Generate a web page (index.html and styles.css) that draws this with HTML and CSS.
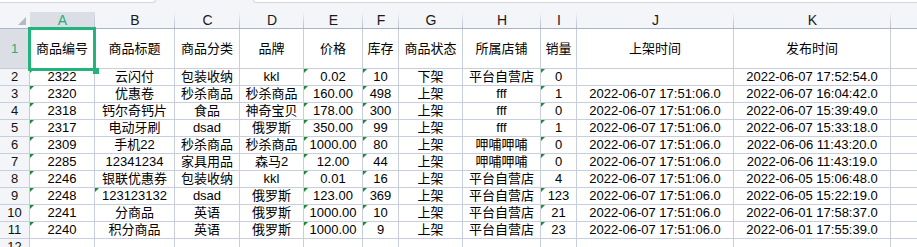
FILE: index.html
```html
<!DOCTYPE html>
<html lang="zh">
<head>
<meta charset="utf-8">
<title>Sheet</title>
<link rel="stylesheet" href="styles.css">
</head>
<body>
<div class="app">
  <div class="topbar">
    <div class="fbox name-box"></div>
    <div class="fbox formula-box"></div>
  </div>
  <div class="sheet">
    <div class="grid">
      <div class="corner"><span class="corner-tri"></span></div>
      <div class="colh sel">A</div><div class="colh">B</div><div class="colh">C</div><div class="colh">D</div><div class="colh">E</div><div class="colh">F</div><div class="colh">G</div><div class="colh">H</div><div class="colh">I</div><div class="colh">J</div><div class="colh">K</div><div class="colh last"></div>

      <div class="rowh sel">1</div>
      <div class="c">商品编号</div><div class="c">商品标题</div><div class="c">商品分类</div><div class="c">品牌</div><div class="c">价格</div><div class="c">库存</div><div class="c">商品状态</div><div class="c">所属店铺</div><div class="c">销量</div><div class="c">上架时间</div><div class="c">发布时间</div><div class="c"></div>

      <div class="rowh">2</div>
      <div class="c t">2322</div><div class="c">云闪付</div><div class="c">包装收纳</div><div class="c">kkl</div><div class="c t">0.02</div><div class="c t">10</div><div class="c">下架</div><div class="c">平台自营店</div><div class="c t">0</div><div class="c"></div><div class="c">2022-06-07 17:52:54.0</div><div class="c"></div>

      <div class="rowh">3</div>
      <div class="c t">2320</div><div class="c">优惠卷</div><div class="c">秒杀商品</div><div class="c">秒杀商品</div><div class="c t">160.00</div><div class="c t">498</div><div class="c">上架</div><div class="c">fff</div><div class="c t">1</div><div class="c">2022-06-07 17:51:06.0</div><div class="c">2022-06-07 16:04:42.0</div><div class="c"></div>

      <div class="rowh">4</div>
      <div class="c t">2318</div><div class="c">钙尔奇钙片</div><div class="c">食品</div><div class="c">神奇宝贝</div><div class="c t">178.00</div><div class="c t">300</div><div class="c">上架</div><div class="c">fff</div><div class="c t">0</div><div class="c">2022-06-07 17:51:06.0</div><div class="c">2022-06-07 15:39:49.0</div><div class="c"></div>

      <div class="rowh">5</div>
      <div class="c t">2317</div><div class="c">电动牙刷</div><div class="c">dsad</div><div class="c">俄罗斯</div><div class="c t">350.00</div><div class="c t">99</div><div class="c">上架</div><div class="c">fff</div><div class="c t">1</div><div class="c">2022-06-07 17:51:06.0</div><div class="c">2022-06-07 15:33:18.0</div><div class="c"></div>

      <div class="rowh">6</div>
      <div class="c t">2309</div><div class="c">手机22</div><div class="c">秒杀商品</div><div class="c">秒杀商品</div><div class="c t">1000.00</div><div class="c t">80</div><div class="c">上架</div><div class="c">呷哺呷哺</div><div class="c t">0</div><div class="c">2022-06-07 17:51:06.0</div><div class="c">2022-06-06 11:43:20.0</div><div class="c"></div>

      <div class="rowh">7</div>
      <div class="c t">2285</div><div class="c">12341234</div><div class="c">家具用品</div><div class="c">森马2</div><div class="c t">12.00</div><div class="c t">44</div><div class="c">上架</div><div class="c">呷哺呷哺</div><div class="c t">0</div><div class="c">2022-06-07 17:51:06.0</div><div class="c">2022-06-06 11:43:19.0</div><div class="c"></div>

      <div class="rowh">8</div>
      <div class="c t">2246</div><div class="c">银联优惠券</div><div class="c">包装收纳</div><div class="c">kkl</div><div class="c t">0.01</div><div class="c t">16</div><div class="c">上架</div><div class="c">平台自营店</div><div class="c">4</div><div class="c">2022-06-07 17:51:06.0</div><div class="c">2022-06-05 15:06:48.0</div><div class="c"></div>

      <div class="rowh">9</div>
      <div class="c t">2248</div><div class="c t">123123132</div><div class="c">dsad</div><div class="c">俄罗斯</div><div class="c t">123.00</div><div class="c t">369</div><div class="c">上架</div><div class="c">平台自营店</div><div class="c t">123</div><div class="c">2022-06-07 17:51:06.0</div><div class="c">2022-06-05 15:22:19.0</div><div class="c"></div>

      <div class="rowh">10</div>
      <div class="c t">2241</div><div class="c">分商品</div><div class="c">英语</div><div class="c">俄罗斯</div><div class="c t">1000.00</div><div class="c t">10</div><div class="c">上架</div><div class="c">平台自营店</div><div class="c t">21</div><div class="c">2022-06-07 17:51:06.0</div><div class="c">2022-06-01 17:58:37.0</div><div class="c"></div>

      <div class="rowh">11</div>
      <div class="c t">2240</div><div class="c">积分商品</div><div class="c">英语</div><div class="c">俄罗斯</div><div class="c t">1000.00</div><div class="c t">9</div><div class="c">上架</div><div class="c">平台自营店</div><div class="c t">23</div><div class="c">2022-06-07 17:51:06.0</div><div class="c">2022-06-01 17:55:39.0</div><div class="c"></div>

      <div class="rowh">12</div>
      <div class="c"></div><div class="c"></div><div class="c"></div><div class="c"></div><div class="c"></div><div class="c"></div><div class="c"></div><div class="c"></div><div class="c"></div><div class="c"></div><div class="c"></div><div class="c"></div>
    </div>
    <div class="selection"><span class="handle"></span></div>
  </div>
</div>
</body>
</html>
```

FILE: styles.css
```css
html, body {
  margin: 0;
  padding: 0;
  background: #ffffff;
  overflow: hidden;
}

.app {
  width: 917px;
  height: 247px;
  overflow: hidden;
  font-family: "Liberation Sans", Arial, "Noto Sans CJK SC", sans-serif;
  color: #000;
}

.topbar {
  height: 4px;
  display: flex;
  background: #f4f5f8;
  border-bottom: 0;
}

.fbox {
  height: 3px;
  box-sizing: border-box;
  background: #fff;
  border: 1px solid #d3d6dc;
  border-top: none;
}

.name-box {
  width: 157px;
  margin-left: -1px;
  border-radius: 0 0 4px 0;
}

.formula-box {
  flex: 1;
  margin-left: 97px;
  margin-right: -6px;
  border-radius: 0 0 0 4px;
}

.sheet {
  position: relative;
  background: #f4f5f8;
  padding-top: 8px;
  border-top: 0;
}

.grid {
  display: grid;
  grid-template-columns: 30px 65px 80px 65px 64px 59px 36px 64px 78px 36px 157px 157px 60px;
  grid-template-rows: 17px 40px repeat(11, 17px);
}

.grid > div {
  box-sizing: border-box;
  overflow: hidden;
  white-space: nowrap;
}

.corner {
  position: relative;
  background: #f4f5f8;
  border-bottom: 1px solid #a9b3ca;
}

.corner-tri {
  position: absolute;
  left: 18px;
  bottom: 3px;
  width: 0;
  height: 0;
  border-left: 8px solid transparent;
  border-bottom: 8px solid #b6b9c1;
}

.colh {
  background-color: #f4f5f8;
  background-image: linear-gradient(to bottom, rgba(184, 191, 210, 0), #b7bed2);
  background-size: 1px 100%;
  background-position: right top;
  background-repeat: no-repeat;
  border-bottom: 1px solid #a9b3ca;
  text-align: center;
  font-size: 14px;
  line-height: 16px;
  color: #1a1a1a;
}

.colh.sel {
  background-color: #dbdee5;
  color: #1fae78;
}

.rowh {
  background: #f4f5f8;
  border-right: 1px solid #c3c9d9;
  border-bottom: 1px solid #c9cedd;
  font-size: 13px;
  line-height: 16px;
  text-align: center;
  color: #111;
  display: flex;
  align-items: center;
  justify-content: center;
}

.rowh.sel {
  background: #dbdee5;
  color: #1fae78;
}

.c {
  position: relative;
  background: #fff;
  border-right: 1px solid #c9cedd;
  border-bottom: 1px solid #c9cedd;
  font-size: 13px;
  line-height: 16px;
  text-align: center;
  display: flex;
  align-items: center;
  justify-content: center;
}

.t::before {
  content: "";
  position: absolute;
  left: 0;
  top: 0;
  width: 0;
  height: 0;
  border-top: 4px solid #1b8c36;
  border-right: 4px solid transparent;
}

.selection {
  position: absolute;
  left: 28px;
  top: 23px;
  width: 68px;
  height: 44px;
  box-sizing: border-box;
  border: 3px solid #21b47b;
  pointer-events: none;
}

.handle {
  position: absolute;
  right: -6px;
  bottom: -6px;
  width: 6px;
  height: 6px;
  background: #21b47b;
}
```
